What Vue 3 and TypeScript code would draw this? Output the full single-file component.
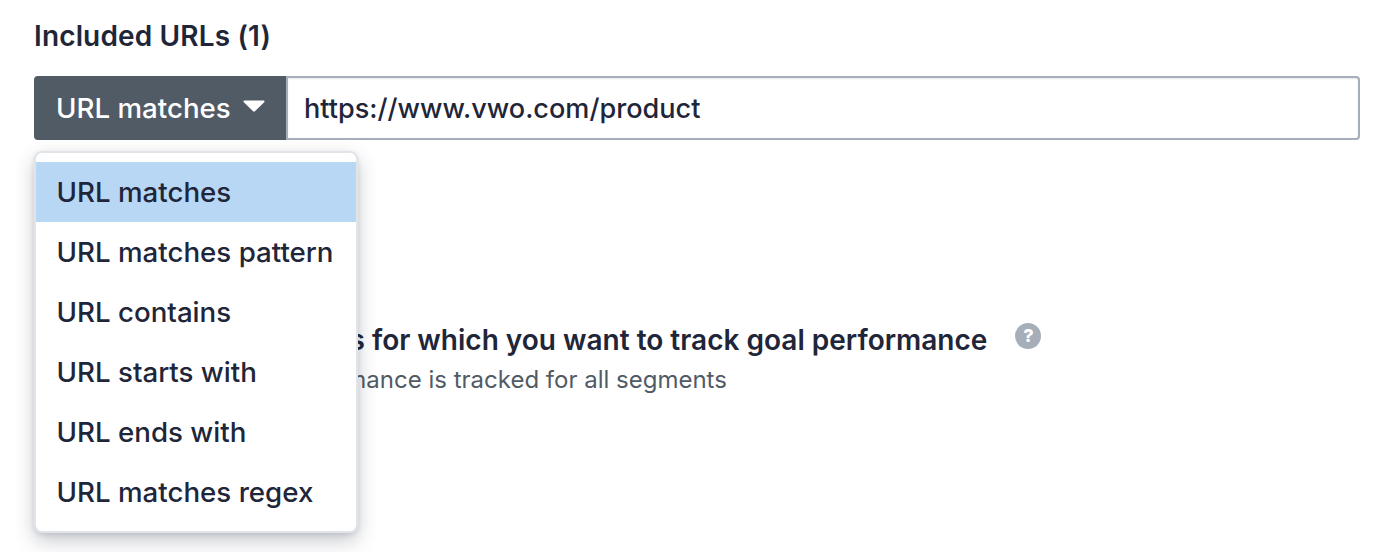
<script setup lang="ts">
const options: string[] = [
  'URL matches',
  'URL matches pattern',
  'URL contains',
  'URL starts with',
  'URL ends with',
  'URL matches regex',
]
</script>

<template>
  <div class="page">
    <h2 class="title">Included URLs (1)</h2>
    <div class="url-row">
      <div class="select-wrap">
        <button class="select-btn" type="button">
          <span>URL matches</span>
          <svg class="caret" width="22" height="12" viewBox="0 0 22 12"><path d="M1.6 0.5h18.8c1 0 1.5 1.1.8 1.800l-9.300 9c-.5.5-1.300.5-1.800 0l-9.300-9C.1 1.600.6.5 1.600.5z" fill="#fff" /></svg>
        </button>
        <ul class="menu">
          <li v-for="(o, i) in options" :key="o" class="item" :class="{ active: i === 0 }">{{ o }}</li>
        </ul>
      </div>
      <div class="url-input">https://www.vwo.com/product</div>
    </div>
    <section class="segments">
      <div class="seg-head">
        <span class="seg-title">Select the key segments for which you want to track goal performance</span>
        <span class="help">?</span>
      </div>
      <p class="seg-sub">By default, your goal performance is tracked for all segments</p>
    </section>
  </div>
</template>

<style scoped>
.page {
  width: 1386px;
  height: 552px;
  box-sizing: border-box;
  padding: 20px 26px 0 34px;
  font-family: Inter, "Liberation Sans", sans-serif;
  color: #1f2937;
  overflow: hidden;
  background: #fff;
}
.title {
  margin: 0;
  font-size: 28px;
  line-height: 32px;
  letter-spacing: 0.15px;
  font-weight: 600;
  color: #1f2639;
}
.url-row {
  display: flex;
  margin-top: 24px;
  height: 64px;
}
.select-wrap {
  position: relative;
  flex: none;
  width: 252px;
}
.select-btn {
  width: 100%;
  height: 64px;
  box-sizing: border-box;
  display: flex;
  align-items: center;
  gap: 12px;
  padding: 0 0 0 22px;
  border: 0;
  border-radius: 4px 0 0 4px;
  background: #515b66;
  color: #fff;
  font: 500 27.7px/32px Inter, "Liberation Sans", sans-serif;
}
.caret {
  flex: none;
  margin-top: -4px;
}
.menu {
  position: absolute;
  top: 75px;
  left: 0;
  z-index: 2;
  width: 324px;
  box-sizing: border-box;
  margin: 0;
  padding: 9px 0;
  list-style: none;
  background: #fff;
  border: 2px solid #e1e4e9;
  border-radius: 8px;
  box-shadow: 0 8px 20px rgba(31, 38, 57, 0.24), 0 2px 5px rgba(31, 38, 57, 0.12);
}
.item {
  height: 60px;
  display: flex;
  align-items: center;
  padding-left: 20.5px;
  font-size: 27.7px;
  font-weight: 500;
  color: #1f2639;
  white-space: nowrap;
}
.item.active {
  background: #b8d7f5;
}
.url-input {
  flex: 1;
  box-sizing: border-box;
  display: flex;
  align-items: center;
  padding-left: 16px;
  border: 2px solid #a6aeb9;
  border-radius: 0 4px 4px 0;
  background: #fff;
  box-shadow: inset 0 1px 2px rgba(31, 38, 57, 0.1);
  font-size: 27.1px;
  font-weight: 500;
  color: #1f2639;
}
.segments {
  margin-top: 182px;
}
.seg-head {
  display: flex;
  align-items: center;
}
.seg-title {
  font-size: 28px;
  line-height: 36px;
  font-weight: 600;
  color: #1f2639;
  white-space: nowrap;
}
.help {
  width: 26px;
  height: 26px;
  margin: -8px 0 0 28px;
  border-radius: 50%;
  background: #a6aeb9;
  color: #fff;
  font-size: 18px;
  font-weight: 800;
  line-height: 26px;
  text-align: center;
}
.seg-sub {
  margin: 6px 0 0;
  font-size: 24px;
  line-height: 32px;
  color: #515b66;
  white-space: nowrap;
}
</style>
